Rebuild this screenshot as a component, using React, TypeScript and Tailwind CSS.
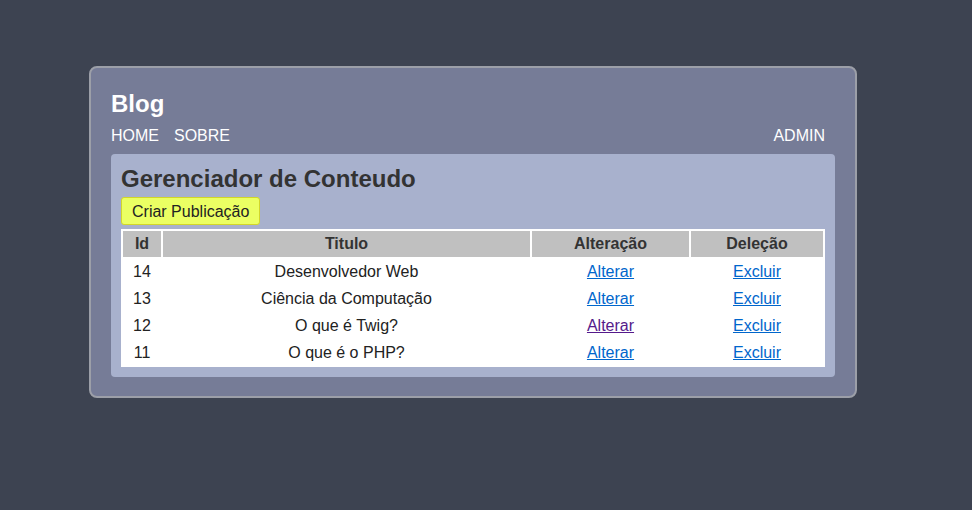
import React from "react";

const posts = [
  { id: 14, titulo: "Desenvolvedor Web", visited: false },
  { id: 13, titulo: "Ciência da Computação", visited: false },
  { id: 12, titulo: "O que é Twig?", visited: true },
  { id: 11, titulo: "O que é o PHP?", visited: false },
];

export default function App() {
  return (
    <div
      className="min-h-screen w-full bg-[#3d4351] pt-[66px] pl-[89px] text-base"
      style={{ fontFamily: '"Liberation Sans", Arial, sans-serif' }}
    >
      <div className="w-[768px] rounded-lg border-2 border-[#9c9fa8] bg-[#767c97] px-5 pt-[22px] pb-[19px]">
        {/* Header */}
        <h1 className="text-2xl leading-[28px] font-bold text-white">Blog</h1>
        <nav className="mt-[9px] flex h-[18px] items-center justify-between pr-[10px] text-white leading-[18px]">
          <div className="flex gap-[15px]">
            <a href="#">HOME</a>
            <a href="#">SOBRE</a>
          </div>
          <a href="#">ADMIN</a>
        </nav>

        {/* Content */}
        <div className="mt-[9px] rounded bg-[#a8b1cd] px-[10px] pt-[10px] pb-[10px]">
          <h2 className="text-2xl leading-[30px] font-bold text-[#333]">
            Gerenciador de Conteudo
          </h2>
          <button
            type="button"
            className="mt-[3px] h-[28px] rounded-[3px] border border-[#d2d62a] bg-[#ebff63] px-[10px] pt-[2px] text-[#222] leading-[18px]"
          >
            Criar Publicação
          </button>
          <table className="mt-[4px] w-[704px] table-fixed border-separate border-spacing-[2px] bg-white text-[#222]">
            <thead>
              <tr className="h-[26px] bg-[#c0c0c0] font-bold text-[#333]">
                <th className="w-[38px] p-0">Id</th>
                <th className="w-[367px] p-0">Titulo</th>
                <th className="w-[157px] p-0">Alteração</th>
                <th className="w-[132px] p-0">Deleção</th>
              </tr>
            </thead>
            <tbody>
              {posts.map((p) => (
                <tr key={p.id} className="h-[25px] text-center">
                  <td className="p-0">{p.id}</td>
                  <td className="p-0">{p.titulo}</td>
                  <td className="p-0">
                    <a
                      href="#"
                      className={`underline ${p.visited ? "text-[#551a8b]" : "text-[#0066cc]"}`}
                    >
                      Alterar
                    </a>
                  </td>
                  <td className="p-0">
                    <a href="#" className="text-[#0066cc] underline">
                      Excluir
                    </a>
                  </td>
                </tr>
              ))}
            </tbody>
          </table>
        </div>
      </div>
    </div>
  );
}
